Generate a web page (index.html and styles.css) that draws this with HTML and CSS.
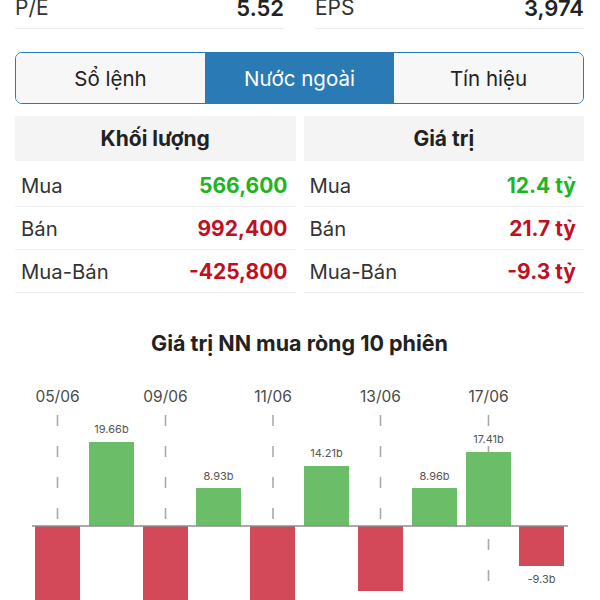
FILE: index.html
```html
<!DOCTYPE html>
<html lang="vi">
  <head>
    <meta charset="UTF-8" />
    <meta name="viewport" content="width=device-width, initial-scale=1.0" />
    <title>Nước ngoài</title>
    <link rel="stylesheet" href="styles.css">
  </head>
  <body>
    <div class="page">
      <div class="stats">
        <div class="stat"><span>P/E</span><b>5.52</b></div>
        <div class="stat"><span>EPS</span><b>3,974</b></div>
      </div>

      <div class="tabs">
        <button>Sổ lệnh</button>
        <button class="valgt">Nước ngoài</button>
        <button>Tín hiệu</button>
      </div>

      <div class="tables">
        <div class="table">
          <div class="thead">Khối lượng</div>
          <div class="row"><span>Mua</span><b class="up">566,600</b></div>
          <div class="row"><span>Bán</span><b class="down">992,400</b></div>
          <div class="row"><span>Mua-Bán</span><b class="down">-425,800</b></div>
        </div>
        <div class="table">
          <div class="thead">Giá trị</div>
          <div class="row"><span>Mua</span><b class="up">12.4 tỷ</b></div>
          <div class="row"><span>Bán</span><b class="down">21.7 tỷ</b></div>
          <div class="row"><span>Mua-Bán</span><b class="down">-9.3 tỷ</b></div>
        </div>
      </div>

      <h3 class="chart-title">Giá trị NN mua ròng 10 phiên</h3>
    </div>

    <!-- chart: coordinates follow the screen, baseline at y=526 -->
    <svg class="chart" width="600" height="228" viewBox="0 372 600 228">
      <g class="grid">
        <line x1="57.5" y1="415" x2="57.5" y2="620" />
        <line x1="165.5" y1="415" x2="165.5" y2="620" />
        <line x1="273" y1="415" x2="273" y2="620" />
        <line x1="380.5" y1="415" x2="380.5" y2="620" />
        <line x1="488.5" y1="415" x2="488.5" y2="620" />
      </g>
      <g class="dates">
        <text x="57.5" y="402">05/06</text>
        <text x="165.5" y="402">09/06</text>
        <text x="273" y="402">11/06</text>
        <text x="380.5" y="402">13/06</text>
        <text x="488.5" y="402">17/06</text>
      </g>
      <g class="bars">
        <rect class="neg" x="35" y="526" width="45" height="100" />
        <rect class="pos" x="89" y="442" width="45" height="84" />
        <rect class="neg" x="143" y="526" width="45" height="100" />
        <rect class="pos" x="196" y="488" width="45" height="38" />
        <rect class="neg" x="250" y="526" width="45" height="100" />
        <rect class="pos" x="304" y="466" width="45" height="60" />
        <rect class="neg" x="358" y="526" width="45" height="65" />
        <rect class="pos" x="412" y="488" width="45" height="38" />
        <rect class="pos" x="466" y="452" width="45" height="74" />
        <rect class="neg" x="519" y="526" width="45" height="40" />
      </g>
      <line class="axis" x1="32" y1="526" x2="568" y2="526" />
      <g class="values">
        <text x="111.5" y="433">19.66b</text>
        <text x="218.5" y="480">8.93b</text>
        <text x="326.5" y="457">14.21b</text>
        <text x="434.5" y="480">8.96b</text>
        <text x="488.5" y="443">17.41b</text>
        <text x="541.5" y="583">-9.3b</text>
      </g>
    </svg>
  </body>
</html>
```

FILE: styles.css
```css
body {
  margin: 0;
  background-color: #fff;
  font-family: "Inter", "Liberation Sans", sans-serif;
  color: #222;
  overflow: hidden;
}

.page {
  padding: 0 16px 0 15px;
}

/* P/E og EPS */
.stats {
  display: grid;
  grid-template-columns: 1fr 1fr;
  gap: 31px;
  margin-top: -13px;
}
.stat {
  display: flex;
  justify-content: space-between;
  align-items: center;
  height: 41px;
  border-bottom: 1px solid #ececec;
  font-size: 21px;
}
.stat span {
  color: #333;
}
.stat b {
  font-weight: 600;
  font-size: 22px;
}

/* faner */
.tabs {
  display: grid;
  grid-template-columns: 1fr 1fr 1fr;
  margin-top: 23px;
  border: 1.5px solid #2a7ab5;
  border-radius: 7px;
  overflow: hidden;
  height: 52px;
  box-sizing: border-box;
}
.tabs button {
  border: none;
  background-color: #f7f7f7;
  font-family: inherit;
  font-size: 20.5px;
  color: #222;
}
.tabs button.valgt {
  background-color: #2a7ab5;
  color: #fff;
}

/* tabeller */
.tables {
  display: grid;
  grid-template-columns: 1fr 1fr;
  gap: 8px;
  margin-top: 12px;
}
.thead {
  background-color: #f4f4f4;
  height: 45px;
  display: flex;
  align-items: center;
  justify-content: center;
  font-weight: 700;
  font-size: 21px;
  margin-bottom: 3px;
}
.row {
  display: flex;
  justify-content: space-between;
  align-items: center;
  height: 43px;
  box-sizing: border-box;
  padding: 0 8px 0 6px;
  border-bottom: 1px solid #eeeeee;
  font-size: 20.3px;
}
.row span {
  color: #333;
}
.row b {
  font-weight: 700;
  font-size: 21px;
}
.up {
  color: #1eb51e;
}
.down {
  color: #c10f1f;
}

.chart-title {
  text-align: center;
  font-size: 21.5px;
  font-weight: 700;
  margin: 37px 0 0;
  height: 28px;
}

/* diagram */
.chart {
  display: block;
  margin-top: 14px;
}
.grid line {
  stroke: #aaaaaa;
  stroke-width: 1.6;
  stroke-dasharray: 11 20;
}
.axis {
  stroke: #8c8c8c;
  stroke-width: 1.5;
}
.pos {
  fill: #6bbd68;
}
.neg {
  fill: #d4495a;
}
.dates text {
  font-size: 15.5px;
  fill: #4a4a4a;
  text-anchor: middle;
}
.values text {
  font-size: 11px;
  fill: #555;
  text-anchor: middle;
}
```
